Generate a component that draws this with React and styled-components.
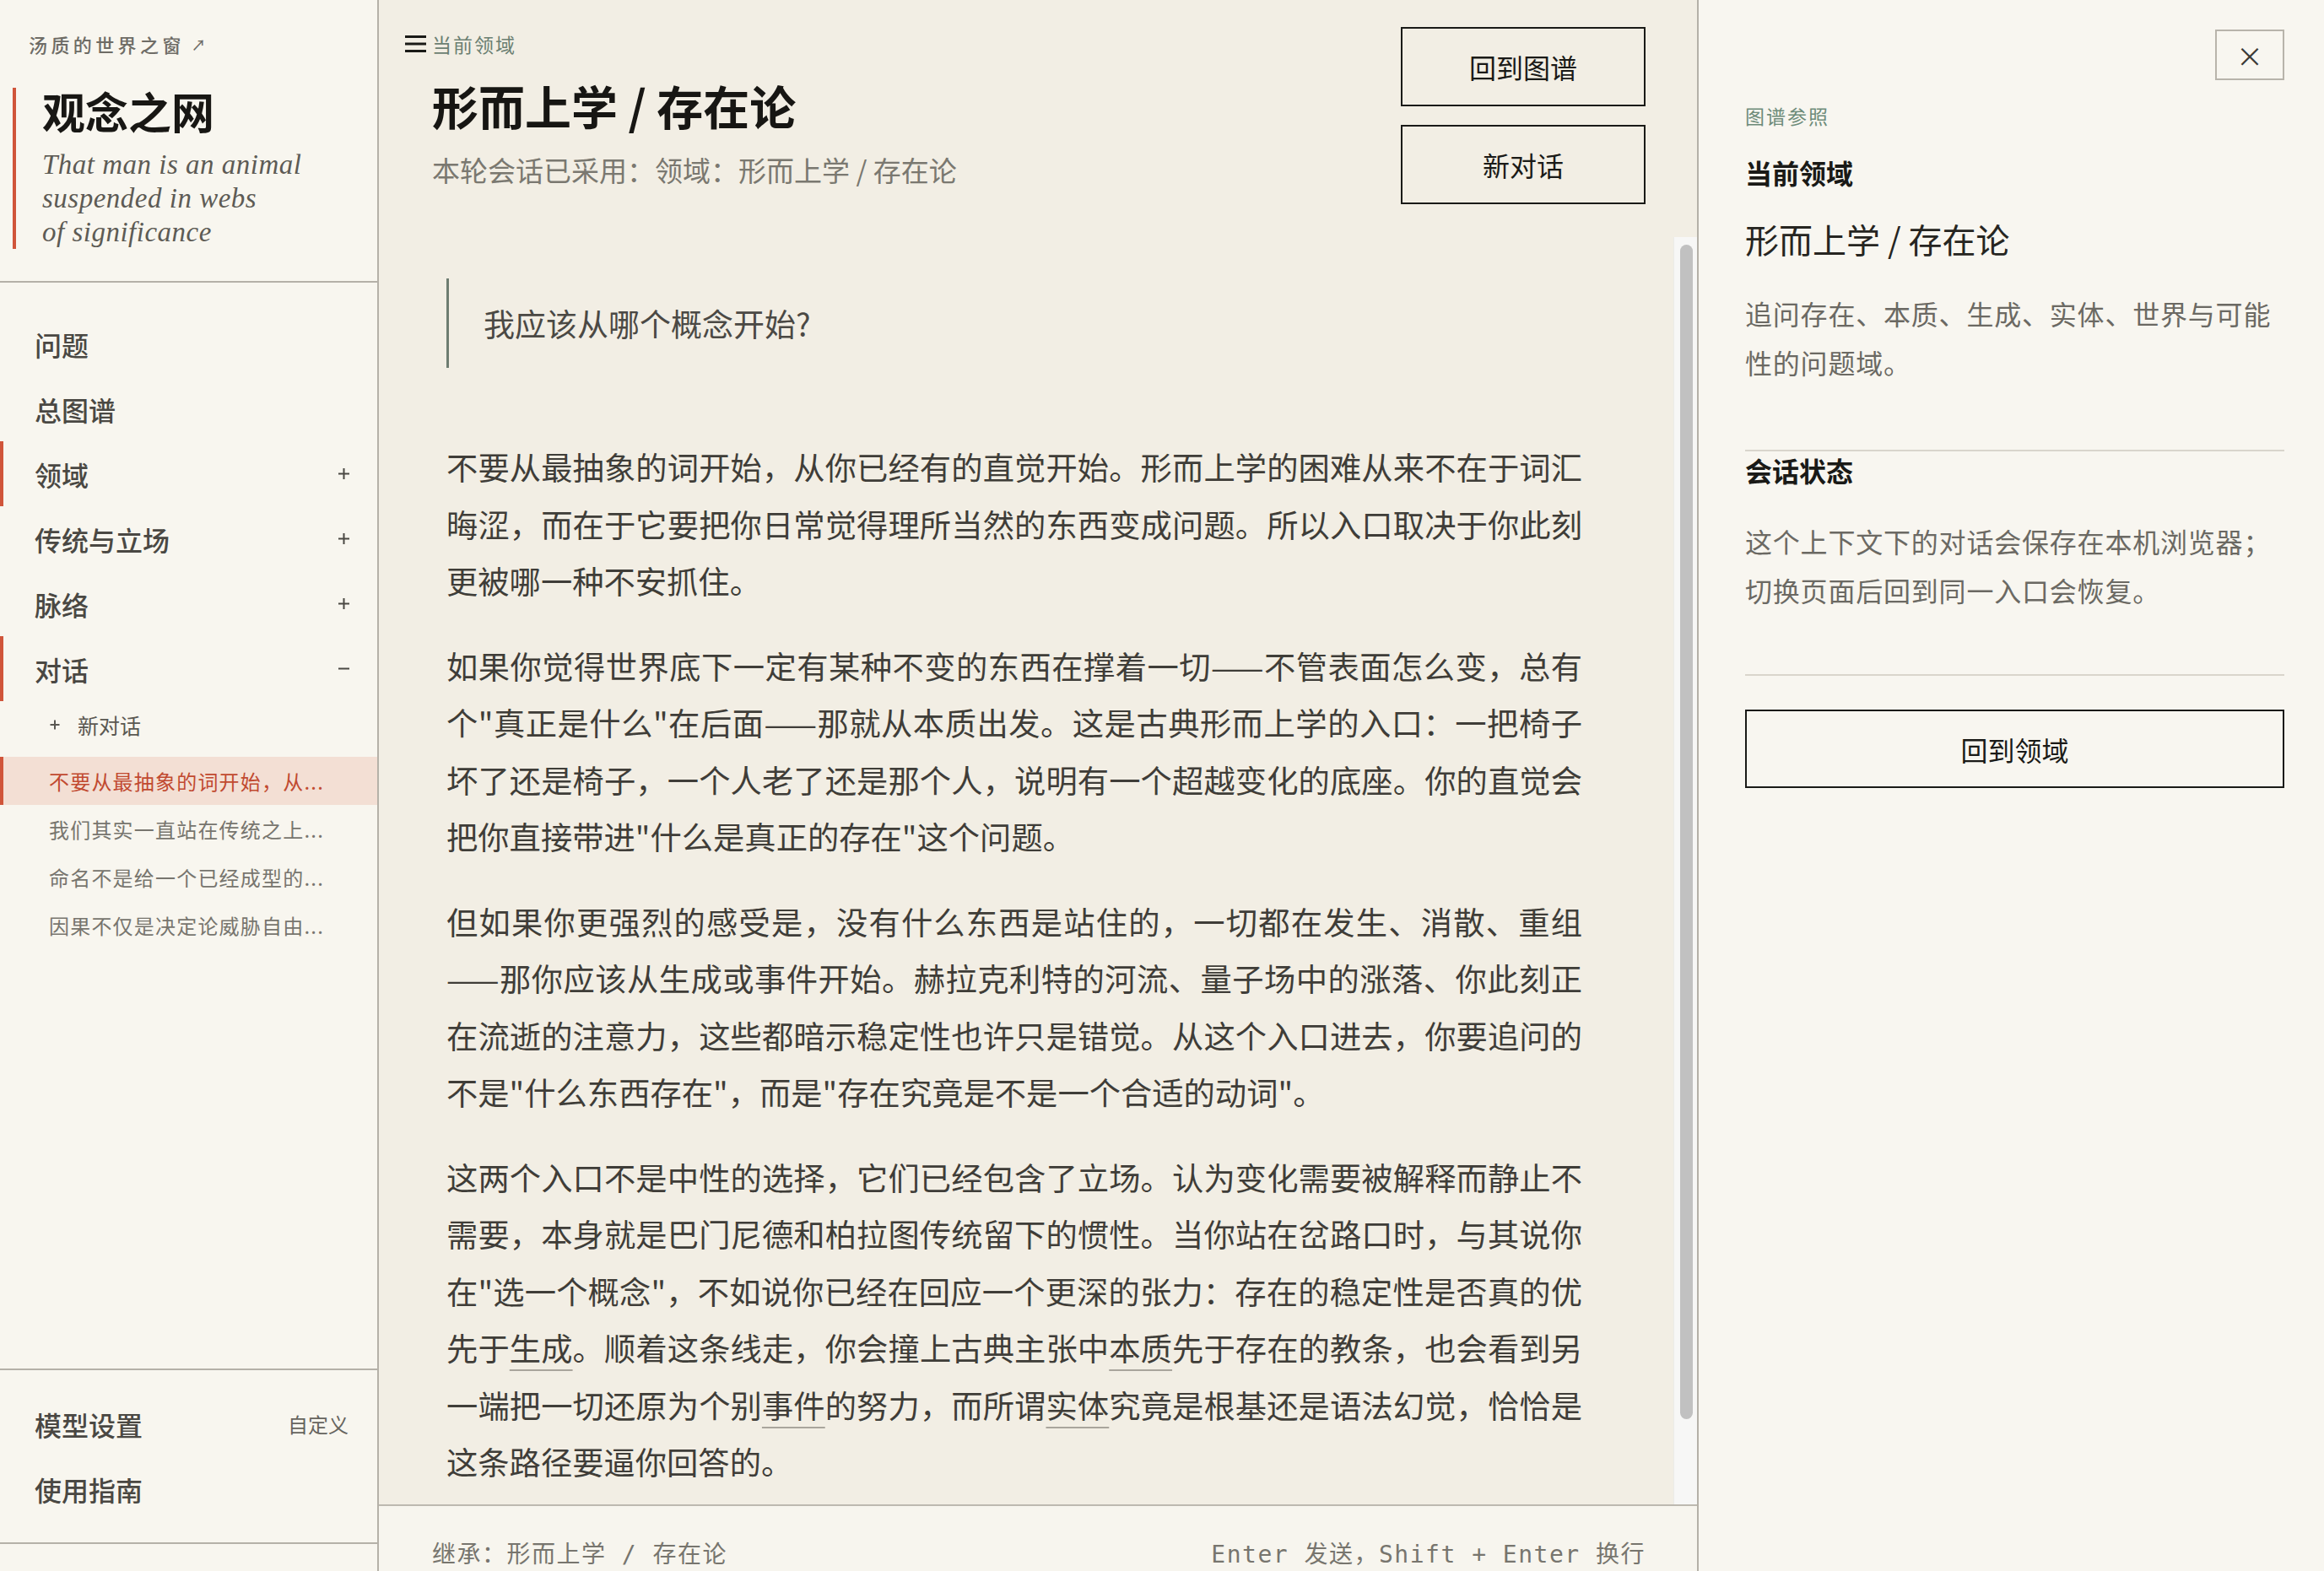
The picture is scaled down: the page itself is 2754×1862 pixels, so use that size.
import React from 'react'
import styled, { createGlobalStyle } from 'styled-components'

const sans = `"Noto Sans CJK SC", "Noto Sans", sans-serif`
const mono = `"DejaVu Sans Mono", "Noto Sans CJK SC", monospace`

const GlobalStyle = createGlobalStyle`
    html, body {
        margin: 0;
        padding: 0;
        height: 100%;
        overflow: hidden;
    }
    body {
        font-family: ${sans};
        background: #f2eee4;
        color: #1a1a17;
    }
    * { box-sizing: border-box; }
    #root { height: 100%; }
`

const Shell = styled.div`
    display: flex;
    height: 100vh;
`

/* ---------- left sidebar ---------- */
const Sidebar = styled.aside`
    width: 449px;
    flex-shrink: 0;
    display: flex;
    flex-direction: column;
    background: #f8f6ef;
    border-right: 2px solid #b5b1a8;
`
const SideTop = styled.div`
    padding: 37px 0 38px;
    border-bottom: 2px solid #b5b1a8;
`
const SiteLink = styled.a`
    display: flex;
    align-items: center;
    height: 30px;
    margin-left: 34px;
    font-size: 22px;
    font-weight: 500;
    letter-spacing: 4.4px;
    color: #6e6c66;
    text-decoration: none;
    .arrow{
        font-size: 17px;
        letter-spacing: 0;
        margin-left: 8px;
    }
`
const Brand = styled.div`
    margin: 37px 0 0 15px;
    padding-left: 31px;
    border-left: 4px solid #d0553a;
`
const BrandTitle = styled.h1`
    margin: 0;
    font-size: 51px;
    line-height: 54px;
    font-weight: 700;
    color: #181714;
`
const Motto = styled.p`
    margin: 17px 0 0;
    font-family: "Liberation Serif", serif;
    font-style: italic;
    font-size: 33px;
    line-height: 40px;
    letter-spacing: 0.5px;
    color: #5d5b55;
`
const Nav = styled.nav`
    flex: 1;
    padding-top: 34px;
`
const NavRow = styled.div`
    height: 77px;
    display: flex;
    align-items: center;
    justify-content: space-between;
    padding: 0 32px 0 41px;
    font-size: 32px;
    font-weight: 500;
    color: #4a4843;
    box-shadow: ${p => p.$marked ? 'inset 4px 0 0 #d0553a' : 'none'};
`
const NewChat = styled.div`
    height: 56px;
    display: flex;
    align-items: center;
    gap: 20px;
    padding-left: 58px;
    font-size: 25px;
    color: #5a5852;
`
const ConvList = styled.div`
    margin-top: 10px;
`
const ConvItem = styled.div`
    height: 57px;
    line-height: 57px;
    padding: 0 20px 0 58px;
    font-size: 24px;
    letter-spacing: 1.2px;
    white-space: nowrap;
    overflow: hidden;
    color: ${p => p.$active ? '#c14a30' : '#77756e'};
    background: ${p => p.$active ? '#f3dfd4' : 'transparent'};
    box-shadow: ${p => p.$active ? 'inset 4px 0 0 #d0553a' : 'none'};
`
const SideFooter = styled.div`
    padding: 25px 0 25px;
    margin-bottom: 32px;
    border-top: 2px solid #b5b1a8;
    border-bottom: 2px solid #b5b1a8;
`
const Hint = styled.span`
    font-size: 24px;
    font-weight: 400;
    color: #66645e;
    padding-right: 2px;
`

/* ---------- main column ---------- */
const Main = styled.main`
    flex: 1;
    min-width: 0;
    display: flex;
    flex-direction: column;
    background: #f2eee4;
`
const Header = styled.header`
    height: 281px;
    flex-shrink: 0;
    display: flex;
    justify-content: space-between;
    padding: 32px 61px 0 63px;
`
const Eyebrow = styled.div`
    display: flex;
    align-items: center;
    gap: 7px;
    height: 30px;
    margin: 5px 0 0 -32px;
    font-size: 23px;
    letter-spacing: 2px;
    color: #6b7f72;
`
const Title = styled.h2`
    margin: 25px 0 0;
    font-size: 55px;
    line-height: 64px;
    font-weight: 700;
    color: #171613;
`
const Subtitle = styled.p`
    margin: 23px 0 0;
    font-size: 33px;
    line-height: 44px;
    color: #7a7870;
`
const ButtonCol = styled.div`
    display: flex;
    flex-direction: column;
    gap: 22px;
`
const OutlineButton = styled.button`
    width: ${p => p.$full ? '100%' : '290px'};
    height: ${p => p.$full ? '93px' : '94px'};
    border: 2px solid #1a1a17;
    background: transparent;
    font-family: ${sans};
    font-size: 32px;
    color: #1a1a17;
    cursor: pointer;
`
const ScrollArea = styled.div`
    flex: 1;
    min-height: 0;
    display: flex;
`
const Thread = styled.div`
    flex: 1;
    min-width: 0;
    overflow: hidden;
    padding: 49px 0 0 80px;
`
const Track = styled.div`
    width: 28px;
    flex-shrink: 0;
    padding: 9px 5px 0 7px;
    background: #f7f7f6;
    border-left: 1px solid #ebebe8;
`
const Thumb = styled.div`
    height: 1392px;
    border-radius: 8px;
    background: #c1c1c1;
`
const Question = styled.div`
    width: 1346px;
    border-left: 3px solid #6e7d71;
    padding: 31px 0 31px 41px;
    font-size: 37px;
    line-height: 44px;
    color: #4b4944;
`
const Answer = styled.div`
    width: 1346px;
    margin-top: 84px;
    p{
        margin: 0 0 33px;
        font-size: 37.3px;
        line-height: 67.5px;
        text-align: justify;
        color: #3f3d38;
    }
`
const Term = styled.span`
    text-decoration: underline;
    text-decoration-color: #a9a59c;
    text-decoration-thickness: 2px;
    text-underline-offset: 10px;
`
const Composer = styled.footer`
    height: 79px;
    flex-shrink: 0;
    overflow: hidden;
    display: flex;
    justify-content: space-between;
    padding: 40px 61px 0 63px;
    border-top: 2px solid #bdb9b0;
    background: #f7f5ee;
    font-family: ${mono};
    font-size: 28px;
    line-height: 36px;
    letter-spacing: 1.5px;
    color: #77756e;
`

/* ---------- right panel ---------- */
const Panel = styled.aside`
    width: 743px;
    flex-shrink: 0;
    display: flex;
    flex-direction: column;
    padding: 35px 47px 0 55px;
    border-left: 2px solid #b5b1a8;
    background: #f8f6f0;
`
const CloseRow = styled.div`
    display: flex;
    justify-content: flex-end;
`
const CloseButton = styled.button`
    width: 82px;
    height: 60px;
    border: 2px solid #b8b4ab;
    background: transparent;
    font-family: ${sans};
    font-size: 32px;
    line-height: 1;
    color: #3b3a36;
`
const PanelLabel = styled.div`
    margin-top: 27px;
    font-size: 23px;
    line-height: 30px;
    letter-spacing: 2px;
    color: #6d8b79;
`
const PanelHeading = styled.h3`
    margin: ${p => p.$flush ? '0' : '30px'} 0 0;
    font-size: 32px;
    line-height: 44px;
    font-weight: 700;
    color: #1a1a17;
`
const DomainName = styled.div`
    margin-top: 31px;
    font-size: 40px;
    line-height: 52px;
    color: #262521;
`
const PanelText = styled.p`
    margin: 33px 0 0;
    font-size: 32px;
    line-height: 58px;
    letter-spacing: 0.8px;
    color: #6b6963;
`
const Rule = styled.hr`
    margin: ${p => p.$gap}px 0 0;
    border: none;
    height: 2px;
    background: #d9d5cc;
`
const PanelAction = styled.div`
    margin-top: 40px;
`

const Plus = () => (
    <svg width="15" height="15" viewBox="0 0 15 15">
        <path d="M7.5 1v13M1 7.5h13" stroke="#4a4843" strokeWidth="2" />
    </svg>
)
const Minus = () => (
    <svg width="15" height="15" viewBox="0 0 15 15">
        <path d="M1 7.5h13" stroke="#4a4843" strokeWidth="2" />
    </svg>
)
const SmallPlus = () => (
    <svg width="14" height="14" viewBox="0 0 14 14">
        <path d="M7 1.5v11M1.5 7h11" stroke="#5a5852" strokeWidth="2" />
    </svg>
)
const MenuIcon = () => (
    <svg width="25" height="22" viewBox="0 0 25 22">
        <path d="M0 2.5h25M0 11h25M0 19.5h25" stroke="#1a1a17" strokeWidth="3" />
    </svg>
)

const conversations = [
    '不要从最抽象的词开始，从你已经有的直觉开始。',
    '我们其实一直站在传统之上，只是没有意识到。',
    '命名不是给一个已经成型的东西贴标签。',
    '因果不仅是决定论威胁自由的问题。',
]
const clip = (s) => s.length > 12 ? s.slice(0, 12) + '...' : s

export default function App() {
    return (
        <>
            <GlobalStyle />
            <Shell>
                <Sidebar>
                    <SideTop>
                        <SiteLink href="#">汤质的世界之窗<span className="arrow">↗</span></SiteLink>
                        <Brand>
                            <BrandTitle>观念之网</BrandTitle>
                            <Motto>That man is an animal<br />suspended in webs<br />of significance</Motto>
                        </Brand>
                    </SideTop>
                    <Nav>
                        <NavRow>问题</NavRow>
                        <NavRow>总图谱</NavRow>
                        <NavRow $marked>领域<Plus /></NavRow>
                        <NavRow>传统与立场<Plus /></NavRow>
                        <NavRow>脉络<Plus /></NavRow>
                        <NavRow $marked>对话<Minus /></NavRow>
                        <NewChat><SmallPlus />新对话</NewChat>
                        <ConvList>
                            {conversations.map((c, i) => (
                                <ConvItem key={i} $active={i === 0} title={c}>{clip(c)}</ConvItem>
                            ))}
                        </ConvList>
                    </Nav>
                    <SideFooter>
                        <NavRow>模型设置<Hint>自定义</Hint></NavRow>
                        <NavRow>使用指南</NavRow>
                    </SideFooter>
                </Sidebar>

                <Main>
                    <Header>
                        <div>
                            <Eyebrow><MenuIcon />当前领域</Eyebrow>
                            <Title>形而上学 / 存在论</Title>
                            <Subtitle>本轮会话已采用：领域：形而上学 / 存在论</Subtitle>
                        </div>
                        <ButtonCol>
                            <OutlineButton>回到图谱</OutlineButton>
                            <OutlineButton>新对话</OutlineButton>
                        </ButtonCol>
                    </Header>
                    <ScrollArea>
                        <Thread>
                            <Question>我应该从哪个概念开始?</Question>
                            <Answer>
                                <p>不要从最抽象的词开始，从你已经有的直觉开始。形而上学的困难从来不在于词汇晦涩，而在于它要把你日常觉得理所当然的东西变成问题。所以入口取决于你此刻更被哪一种不安抓住。</p>
                                <p>如果你觉得世界底下一定有某种不变的东西在撑着一切——不管表面怎么变，总有个"真正是什么"在后面——那就从本质出发。这是古典形而上学的入口：一把椅子坏了还是椅子，一个人老了还是那个人，说明有一个超越变化的底座。你的直觉会把你直接带进"什么是真正的存在"这个问题。</p>
                                <p>但如果你更强烈的感受是，没有什么东西是站住的，一切都在发生、消散、重组——那你应该从生成或事件开始。赫拉克利特的河流、量子场中的涨落、你此刻正在流逝的注意力，这些都暗示稳定性也许只是错觉。从这个入口进去，你要追问的不是"什么东西存在"，而是"存在究竟是不是一个合适的动词"。</p>
                                <p>这两个入口不是中性的选择，它们已经包含了立场。认为变化需要被解释而静止不需要，本身就是巴门尼德和柏拉图传统留下的惯性。当你站在岔路口时，与其说你在"选一个概念"，不如说你已经在回应一个更深的张力：存在的稳定性是否真的优先于<Term>生成</Term>。顺着这条线走，你会撞上古典主张中<Term>本质</Term>先于存在的教条，也会看到另一端把一切还原为个别<Term>事件</Term>的努力，而所谓<Term>实体</Term>究竟是根基还是语法幻觉，恰恰是这条路径要逼你回答的。</p>
                            </Answer>
                        </Thread>
                        <Track><Thumb /></Track>
                    </ScrollArea>
                    <Composer>
                        <span>继承：形而上学 / 存在论</span>
                        <span>Enter 发送，Shift + Enter 换行</span>
                    </Composer>
                </Main>

                <Panel>
                    <CloseRow><CloseButton aria-label="关闭">×</CloseButton></CloseRow>
                    <PanelLabel>图谱参照</PanelLabel>
                    <PanelHeading>当前领域</PanelHeading>
                    <DomainName>形而上学 / 存在论</DomainName>
                    <PanelText>追问存在、本质、生成、实体、世界与可能性的问题域。</PanelText>
                    <Rule $gap={75} />
                    <PanelHeading $flush>会话状态</PanelHeading>
                    <PanelText>这个上下文下的对话会保存在本机浏览器；切换页面后回到同一入口会恢复。</PanelText>
                    <Rule $gap={71} />
                    <PanelAction>
                        <OutlineButton $full>回到领域</OutlineButton>
                    </PanelAction>
                </Panel>
            </Shell>
        </>
    )
}
